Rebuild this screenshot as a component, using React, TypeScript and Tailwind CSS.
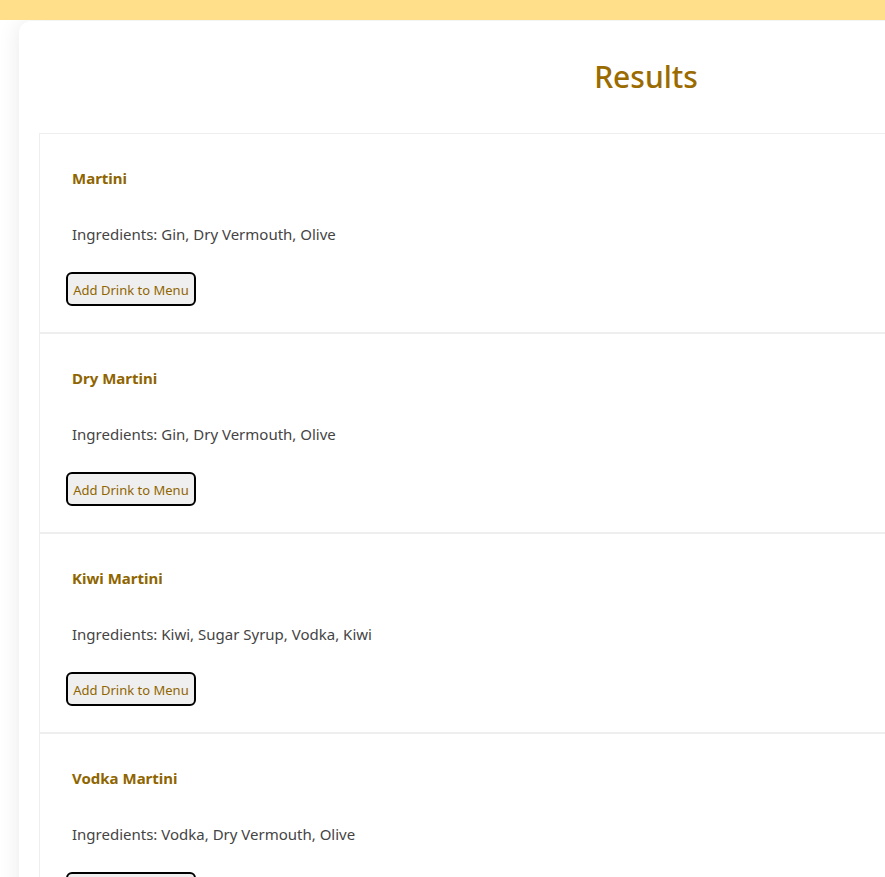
const drinks = [
  { name: "Martini", ingredients: ["Gin", "Dry Vermouth", "Olive"] },
  { name: "Dry Martini", ingredients: ["Gin", "Dry Vermouth", "Olive"] },
  { name: "Kiwi Martini", ingredients: ["Kiwi", "Sugar Syrup", "Vodka", "Kiwi"] },
  { name: "Vodka Martini", ingredients: ["Vodka", "Dry Vermouth", "Olive"] },
];

export default function App() {
  return (
    <div className="min-h-screen bg-white overflow-hidden" style={{ fontFamily: '"Noto Sans", "Open Sans", sans-serif' }}>
      {/* top bar */}
      <div className="relative z-10 h-5 bg-[#ffdf8a]" />

      <div className="pl-[19px] pt-px">
        <div className="w-[1254px] bg-white rounded-tl-xl shadow-[0_0_22px_rgba(0,0,0,0.09)] px-5 pb-10">
          <h1 className="text-center text-[30px] leading-[40px] text-[#9a6b00] pt-[36px] pb-[36px] font-medium">
            Results
          </h1>

          <ul className="border border-[#eeeeee]">
            {drinks.map((d, i) => (
              <li
                key={d.name}
                className={`px-8 pt-[34px] pb-[26px] ${i > 0 ? "border-t-2 border-[#eeeeee]" : ""}`}
              >
                <h3 className="text-[15px] leading-5 font-bold text-[#8f6500]">{d.name}</h3>
                <p className="mt-9 text-[15px] leading-5 text-[#444444]">
                  Ingredients: {d.ingredients.join(", ")}
                </p>
                <button className="mt-7 -ml-[6px] h-[34px] w-[130px] rounded-md border-2 border-black bg-[#efefef] pt-[3px] text-[13px] text-[#8f6500]">
                  Add Drink to Menu
                </button>
              </li>
            ))}
          </ul>
        </div>
      </div>
    </div>
  );
}
